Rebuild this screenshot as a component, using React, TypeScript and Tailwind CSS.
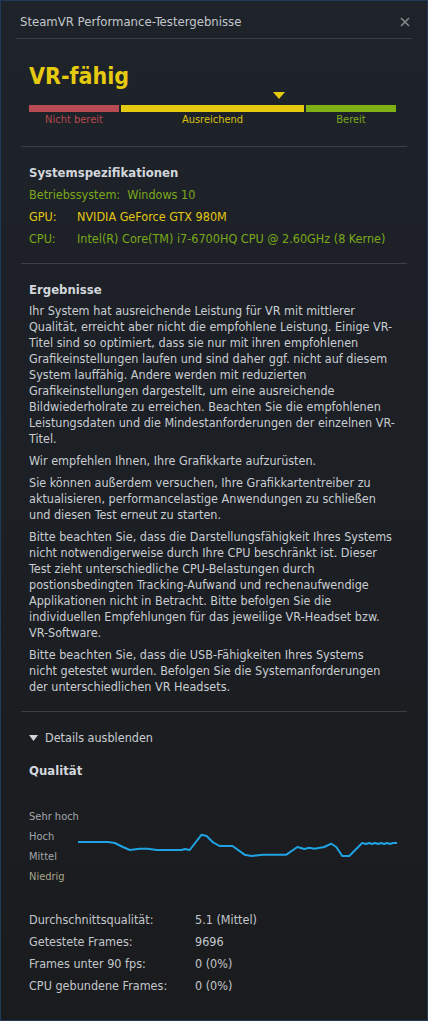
const font = { fontFamily: '"DejaVu Sans Condensed", "DejaVu Sans", sans-serif' };

const points: [number, number][] = [
  [0, 35], [30, 35], [37, 36], [45, 40], [52, 43], [62, 41.7], [70, 41.7], [79, 43],
  [104, 43], [107, 42], [112, 43], [124, 27.7], [129, 29], [135, 35], [142, 39],
  [155, 39], [167, 47.7], [174, 49], [185, 47.7], [209, 47.7], [220, 40], [227, 42],
  [232, 40.7], [237, 41.7], [247, 40], [254, 36.7], [259, 40], [265, 49], [272, 49],
  [285, 36], [289, 37], [292, 36], [295, 37], [298, 36], [301, 37], [304, 36],
  [307, 37], [310, 36], [313, 37], [316, 36], [320, 36],
];

const paragraphs: string[][] = [
  [
    "Ihr System hat ausreichende Leistung für VR mit mittlerer",
    "Qualität, erreicht aber nicht die empfohlene Leistung. Einige VR-",
    "Titel sind so optimiert, dass sie nur mit ihren empfohlenen",
    "Grafikeinstellungen laufen und sind daher ggf. nicht auf diesem",
    "System lauffähig. Andere werden mit reduzierten",
    "Grafikeinstellungen dargestellt, um eine ausreichende",
    "Bildwiederholrate zu erreichen. Beachten Sie die empfohlenen",
    "Leistungsdaten und die Mindestanforderungen der einzelnen VR-",
    "Titel.",
  ],
  ["Wir empfehlen Ihnen, Ihre Grafikkarte aufzurüsten."],
  [
    "Sie können außerdem versuchen, Ihre Grafikkartentreiber zu",
    "aktualisieren, performancelastige Anwendungen zu schließen",
    "und diesen Test erneut zu starten.",
  ],
  [
    "Bitte beachten Sie, dass die Darstellungsfähigkeit Ihres Systems",
    "nicht notwendigerweise durch Ihre CPU beschränkt ist. Dieser",
    "Test zieht unterschiedliche CPU-Belastungen durch",
    "postionsbedingten Tracking-Aufwand und rechenaufwendige",
    "Applikationen nicht in Betracht. Bitte befolgen Sie die",
    "individuellen Empfehlungen für das jeweilige VR-Headset bzw.",
    "VR-Software.",
  ],
  [
    "Bitte beachten Sie, dass die USB-Fähigkeiten Ihres Systems",
    "nicht getestet wurden. Befolgen Sie die Systemanforderungen",
    "der unterschiedlichen VR Headsets.",
  ],
];

const stats = [
  ["Durchschnittsqualität:", "5.1 (Mittel)"],
  ["Getestete Frames:", "9696"],
  ["Frames unter 90 fps:", "0 (0%)"],
  ["CPU gebundene Frames:", "0 (0%)"],
];

export default function App() {
  return (
    <div
      style={font}
      className="flex h-[1021px] w-[428px] flex-col border border-[#1f3b57] bg-linear-to-b from-[#1e232a] via-[#1c1f24] to-[#1a1b1d] text-[12px] text-[#c5c9ce]"
    >
      {/* title bar */}
      <div className="mx-[15px] flex h-[38px] items-center justify-between border-b border-[#3c3f43] pl-[4px] pr-[2px] pt-[4px]">
        <span className="text-[13px] text-[#c3c7cc]">SteamVR Performance-Testergebnisse</span>
        <svg width="10" height="10" viewBox="0 0 10 10">
          <path d="M1 1 L9 9 M9 1 L1 9" stroke="#85898e" strokeWidth="1.6" />
        </svg>
      </div>

      {/* verdict */}
      <div className="px-[28px]">
        <div className="mt-[24px] text-[23px] font-bold leading-[26px] text-[#e5ca10]">VR-fähig</div>
        <div className="mt-[3px] h-[8px] pl-[244px]">
          <svg width="12" height="8" viewBox="0 0 12 8">
            <path d="M0 0 H12 L6 7 Z" fill="#e5ca10" />
          </svg>
        </div>
        <div className="mt-[5px] flex gap-[2px]">
          <div className="flex w-[90px] flex-col items-center">
            <div className="h-[7px] w-full bg-[#b84b53]" />
            <span className="text-[11px] leading-[15px] text-[#b9474f]">Nicht bereit</span>
          </div>
          <div className="flex w-[183px] flex-col items-center">
            <div className="h-[7px] w-full bg-[#e5ca10]" />
            <span className="text-[11px] leading-[15px] text-[#d9c010]">Ausreichend</span>
          </div>
          <div className="flex w-[90px] flex-col items-center">
            <div className="h-[7px] w-full bg-[#7fb015]" />
            <span className="text-[11px] leading-[15px] text-[#7aa917]">Bereit</span>
          </div>
        </div>
      </div>

      <div className="mx-[20px] mt-[19px] border-b border-[#3c3f43]" />

      {/* system specs */}
      <div className="px-[28px]">
        <div className="mt-[18px] text-[13px] font-bold leading-[16px] text-[#d3d7dc]">Systemspezifikationen</div>
        <div className="mt-[3px] text-[12.5px] leading-[22px]">
          <div className="text-[#7ba81a]">Betriebssystem:&nbsp; Windows 10</div>
          <div className="flex text-[#e2c711]">
            <span className="w-[48px]">GPU:</span>
            <span>NVIDIA GeForce GTX 980M</span>
          </div>
          <div className="flex text-[#7ba81a]">
            <span className="w-[48px]">CPU:</span>
            <span>Intel(R) Core(TM) i7-6700HQ CPU @ 2.60GHz (8 Kerne)</span>
          </div>
        </div>
      </div>

      <div className="mx-[20px] mt-[13px] border-b border-[#3c3f43]" />

      {/* results */}
      <div className="px-[28px]">
        <div className="mt-[18px] text-[13px] font-bold leading-[16px] text-[#d3d7dc]">Ergebnisse</div>
        <div className="mt-[5px] flex flex-col gap-[6px] text-[12.5px] leading-[16px] text-[#c9cdd2]">
          {paragraphs.map((lines, i) => (
            <p key={i} className="whitespace-nowrap">
              {lines.map((l, j) => (
                <span key={j} className="block">
                  {l}
                </span>
              ))}
            </p>
          ))}
        </div>
      </div>

      <div className="mx-[20px] mt-[16px] border-b border-[#3c3f43]" />

      {/* details */}
      <div className="px-[28px]">
        <div className="mt-[18px] flex items-center gap-[7px] text-[12.5px] leading-[16px] text-[#c9cdd2]">
          <svg width="9" height="6" viewBox="0 0 9 6">
            <path d="M0 0 H9 L4.5 6 Z" fill="#d0d3d7" />
          </svg>
          <span>Details ausblenden</span>
        </div>
        <div className="mt-[17px] text-[13px] font-bold leading-[16px] text-[#d3d7dc]">Qualität</div>

        <div className="mt-[28px] flex">
          <div className="flex w-[50px] flex-col whitespace-nowrap text-[11px] leading-[20px] text-[#a3a7ab]">
            <span>Sehr hoch</span>
            <span>Hoch</span>
            <span>Mittel</span>
            <span className="text-[#a7a58a]">Niedrig</span>
          </div>
          <svg width="322" height="80" viewBox="0 0 322 80" className="-ml-[1px]">
            <polyline
              points={points.map(([x, y]) => `${x},${y}`).join(" ")}
              fill="none"
              stroke="#1fa3e2"
              strokeWidth="2"
              strokeLinejoin="round"
            />
          </svg>
        </div>

        <div className="mt-[22px] text-[12.5px] leading-[22px] text-[#c3c7cc]">
          {stats.map(([k, v]) => (
            <div key={k} className="flex">
              <span className="w-[166px]">{k}</span>
              <span>{v}</span>
            </div>
          ))}
        </div>
      </div>
    </div>
  );
}
